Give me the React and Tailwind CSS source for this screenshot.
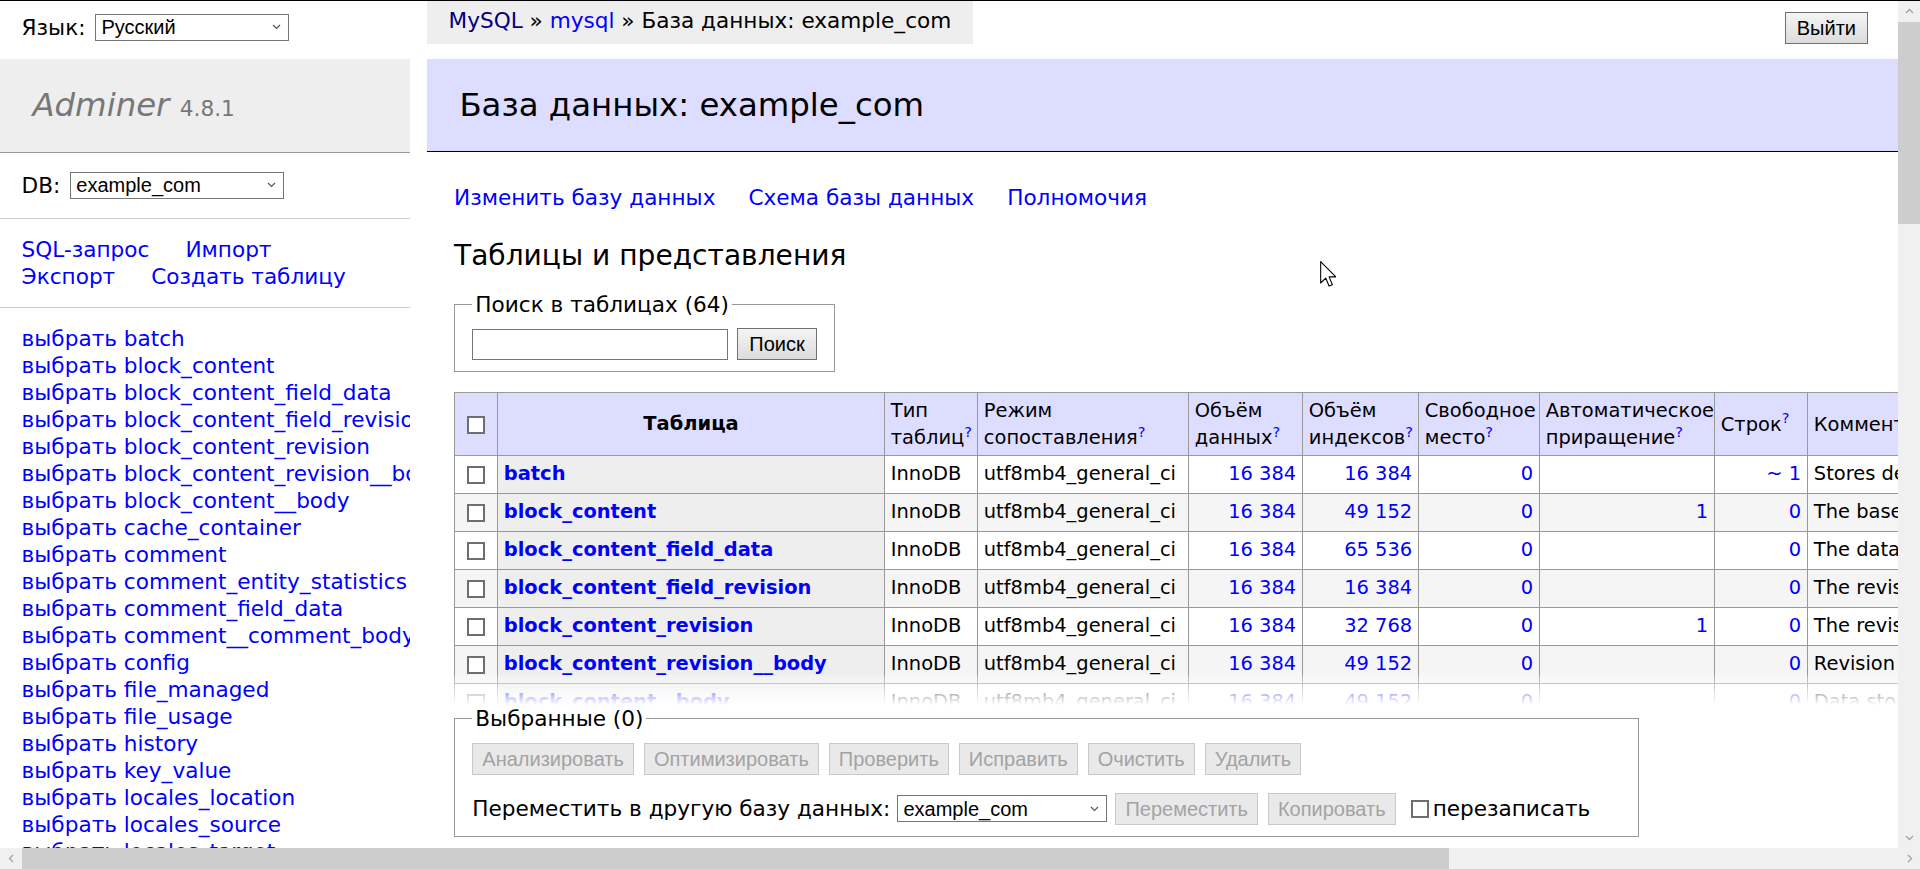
import React from "react";

const tables = [
    ["batch", "16 384", "16 384", "0", "", "~ 1", "Stores details about batches (processes that run in multiple HTTP requests)."],
    ["block_content", "16 384", "49 152", "0", "1", "0", "The base table for block_content entities."],
    ["block_content_field_data", "16 384", "65 536", "0", "", "0", "The data table for block_content entities."],
    ["block_content_field_revision", "16 384", "16 384", "0", "", "0", "The revision data table for block_content entities."],
    ["block_content_revision", "16 384", "32 768", "0", "1", "0", "The revision table for block_content entities."],
    ["block_content_revision__body", "16 384", "49 152", "0", "", "0", "Revision archive storage for block_content field body."],
    ["block_content__body", "16 384", "49 152", "0", "", "0", "Data storage for block_content field body."],
    ["cache_container", "16 384", "16 384", "0", "", "~ 12", "Storage for the cache API."],
    ["comment", "16 384", "16 384", "0", "1", "0", "The base table for comment entities."],
];

const menuTables = [
    "batch", "block_content", "block_content_field_data", "block_content_field_revision",
    "block_content_revision", "block_content_revision__body", "block_content__body",
    "cache_container", "comment", "comment_entity_statistics", "comment_field_data",
    "comment__comment_body", "config", "file_managed", "file_usage", "history",
    "key_value", "locales_location", "locales_source", "locales_target", "menu_link_content",
];

// small pieces shared by sidebar and forms
function Select({ value, className }) {
    return (
        <div className={`inline-flex items-center justify-between h-[27px] border border-[#767676] bg-white pl-[5px] pr-[7px] font-['Liberation_Sans',Arial,sans-serif] text-[20px] leading-none text-black ${className}`}>
            <span>{value}</span>
            <svg width="9" height="6" viewBox="0 0 9 6">
                <path d="M1 1l3.5 3.5L8 1" fill="none" stroke="#555" strokeWidth="1.2" />
            </svg>
        </div>
    );
}

function Checkbox({ className = "" }) {
    return <span className={`inline-block align-middle w-[18px] h-[18px] border-2 border-[#6e6e6e] bg-white ${className}`} />;
}

function Button({ children, disabled, className = "" }) {
    const look = disabled
        ? "px-[9px] border-[#c8c8c8] bg-[#e9e9e9] text-[#a3a3a3]"
        : "px-[11px] border-[#707070] bg-linear-to-b from-[#f4f4f4] to-[#dcdcdc] text-black";
    return (
        <span className={`inline-flex items-center h-[32px] border font-['Liberation_Sans',Arial,sans-serif] text-[20px] leading-none ${look} ${className}`}>
            {children}
        </span>
    );
}

function Help() {
    return <sup className="text-[#00f]">?</sup>;
}

function Chevron({ d }) {
    return (
        <svg width="9" height="9" viewBox="0 0 9 9">
            <path d={d} fill="none" stroke="#a3a3a3" strokeWidth="1.3" />
        </svg>
    );
}

export default function App() {
    const td = "border border-[#999] px-[5.8px] py-[3.9px] align-middle whitespace-nowrap";
    const head = "border border-[#999] bg-[#ddf] px-[5.8px] py-[3.9px] align-middle text-left font-normal leading-[27px]";

    return (
        <div className="w-[1920px] h-[869px] overflow-hidden flex flex-col bg-white border-t border-black font-['DejaVu_Sans',Verdana,sans-serif] text-[21.6px] leading-[27px] text-black">
            <div className="flex flex-1 min-h-0">
                {/* page viewport */}
                <div className="relative flex flex-1 min-w-0 overflow-hidden">
                    {/* Sidebar */}
                    <aside className="w-[410px] shrink-0">
                        <div className="h-[58px] px-[21.6px] pt-[6.5px]">
                            <div className="flex items-center h-[39px] gap-[10px]">
                                <span>Язык:</span>
                                <Select value="Русский" className="w-[194px]" />
                            </div>
                        </div>
                        <h1 className="h-[94px] overflow-hidden bg-[#eee] border-b border-[#999] px-[32.4px] py-[25.9px] text-[32.4px] leading-[40.5px] text-[#777] whitespace-nowrap">
                            <span className="italic">Adminer</span>{" "}
                            <span className="text-[21.7px]">4.8.1</span>
                        </h1>
                        <div className="px-[21.6px] py-[17.3px] border-b border-[#ccc]">
                            <div className="flex items-center h-[30px] gap-[10px]">
                                <span>DB:</span>
                                <Select value="example_com" className="w-[214px]" />
                            </div>
                        </div>
                        <div className="px-[21.6px] py-[17.3px] border-b border-[#ccc] flex flex-wrap gap-x-[36px] text-[#00f]">
                            <span>SQL-запрос</span>
                            <span>Импорт</span>
                            <span>Экспорт</span>
                            <span>Создать таблицу</span>
                        </div>
                        <ul className="px-[21.6px] py-[17.3px] whitespace-nowrap overflow-hidden text-[#00f]">
                            {menuTables.map((t) => (
                                <li key={t}>выбрать {t}</li>
                            ))}
                        </ul>
                    </aside>

                    {/* Content */}
                    <main className="relative ml-[17px] w-[1960px] shrink-0">
                        <div className="flex">
                            <div className="h-[43px] leading-[39px] bg-[#eee] px-[21.6px] whitespace-nowrap">
                                <span className="text-[#000080]">MySQL</span> » <span className="text-[#00f]">mysql</span> » База данных: example_com
                            </div>
                        </div>

                        <h2 className="mt-[15px] bg-[#ddf] border-b border-black px-[32.4px] py-[25.9px] text-[32.4px] leading-[40.5px] font-normal">
                            База данных: example_com
                        </h2>

                        <div className="pl-[27px]">
                            <div className="mt-[32px] flex gap-[33px] text-[#00f]">
                                <span>Изменить базу данных</span>
                                <span>Схема базы данных</span>
                                <span>Полномочия</span>
                            </div>

                            <h3 className="mt-[27px] text-[28.08px] leading-[35.1px]">Таблицы и представления</h3>

                            <fieldset className="mt-[17.3px] w-fit border border-[#999] px-[17.3px] pt-[10.8px] pb-[10.8px]">
                                <legend className="px-[3px]">Поиск в таблицах (64)</legend>
                                <div className="flex items-center gap-[9px]">
                                    <span className="inline-block w-[256px] h-[31px] border border-[#767676] bg-white" />
                                    <Button className="h-[31px]">Поиск</Button>
                                </div>
                            </fieldset>

                            <table className="mt-[20px] border-collapse table-fixed w-[1913px] text-[19.44px] leading-[24.3px]">
                                <colgroup>
                                    <col className="w-[43px]" />
                                    <col className="w-[387px]" />
                                    <col className="w-[93px]" />
                                    <col className="w-[211px]" />
                                    <col className="w-[114px]" />
                                    <col className="w-[116px]" />
                                    <col className="w-[121px]" />
                                    <col className="w-[175px]" />
                                    <col className="w-[93px]" />
                                    <col className="w-[560px]" />
                                </colgroup>
                                <thead>
                                    <tr className="h-[60px]">
                                        <td className={head}><Checkbox className="ml-[6px]" /></td>
                                        <th className="border border-[#999] bg-[#ddf] px-[9.7px] align-middle text-center font-bold">Таблица</th>
                                        <td className={head}>Тип таблиц<Help /></td>
                                        <td className={head}>Режим сопоставления<Help /></td>
                                        <td className={head}>Объём данных<Help /></td>
                                        <td className={head}>Объём индексов<Help /></td>
                                        <td className={head}>Свободное место<Help /></td>
                                        <td className={head}>Автоматическое приращение<Help /></td>
                                        <td className={head}>Строк<Help /></td>
                                        <td className={head}>Комментарий<Help /></td>
                                    </tr>
                                </thead>
                                <tbody>
                                    {tables.map((r, i) => (
                                        <tr key={r[0]} className={`h-[38px] ${i % 2 ? "bg-[#f5f5f5]" : "bg-white"}`}>
                                            <td className={td}><Checkbox className="ml-[6px]" /></td>
                                            <th className={`${td} bg-[#eee] text-left font-bold text-[#00f]`}>{r[0]}</th>
                                            <td className={td}>InnoDB</td>
                                            <td className={td}>utf8mb4_general_ci</td>
                                            <td className={`${td} text-right text-[#00f]`}>{r[1]}</td>
                                            <td className={`${td} text-right text-[#00f]`}>{r[2]}</td>
                                            <td className={`${td} text-right text-[#00f]`}>{r[3]}</td>
                                            <td className={`${td} text-right text-[#00f]`}>{r[4]}</td>
                                            <td className={`${td} text-right text-[#00f]`}>{r[5]}</td>
                                            <td className={td}>{r[6]}</td>
                                        </tr>
                                    ))}
                                </tbody>
                            </table>
                        </div>

                        {/* sticky footer */}
                        <div className="absolute left-[27px] right-0 bottom-0">
                            <div className="h-[30px] bg-linear-to-b from-white/20 to-white" />
                            <div className="bg-white pb-[10.8px]">
                                <fieldset className="w-fit border border-[#999] px-[17.3px] pt-[10.8px] pb-[10.8px]">
                                    <legend className="px-[3px]">Выбранные (0)</legend>
                                    <div className="flex items-center gap-[10px]">
                                        <Button disabled>Анализировать</Button>
                                        <Button disabled>Оптимизировать</Button>
                                        <Button disabled>Проверить</Button>
                                        <Button disabled>Исправить</Button>
                                        <Button disabled>Очистить</Button>
                                        <Button disabled>Удалить</Button>
                                    </div>
                                    <div className="mt-[17.3px] pr-[30px] flex items-center h-[33px] whitespace-nowrap">
                                        <span>Переместить в другую базу данных:</span>
                                        <Select value="example_com" className="w-[210px] ml-[7px]" />
                                        <Button disabled className="ml-[8px]">Переместить</Button>
                                        <Button disabled className="ml-[10px]">Копировать</Button>
                                        <Checkbox className="ml-[15px] mr-[4px]" />
                                        <span>перезаписать</span>
                                    </div>
                                </fieldset>
                            </div>
                        </div>
                    </main>

                    <div className="absolute right-[30px] top-[11px]">
                        <Button>Выйти</Button>
                    </div>

                    {/* mouse pointer */}
                    <svg className="absolute left-[1320px] top-[260px]" width="16" height="26" viewBox="0 0 12 19.5">
                        <path d="M0.5 0.5V16.5L4.3 12.8L6.8 18.8L9.3 17.8L6.8 11.9H11.9Z" fill="white" stroke="black" strokeWidth="0.8" strokeLinejoin="round" />
                    </svg>
                </div>

                {/* vertical scrollbar */}
                <div className="w-[22px] shrink-0 bg-[#f0f0f0] flex flex-col">
                    <div className="h-[21px] flex items-center justify-center">
                        <Chevron d="M1 6l3.5-3.5L8 6" />
                    </div>
                    <div className="h-[202px] bg-[#cdcdcd]" />
                    <div className="flex-1" />
                    <div className="h-[21px] flex items-center justify-center">
                        <Chevron d="M1 3l3.5 3.5L8 3" />
                    </div>
                </div>
            </div>

            {/* horizontal scrollbar */}
            <div className="h-[21px] shrink-0 flex bg-[#f0f0f0]">
                <div className="w-[22px] flex items-center justify-center">
                    <Chevron d="M6 1L2.5 4.5L6 8" />
                </div>
                <div className="w-[1427px] bg-[#cdcdcd]" />
                <div className="flex-1" />
                <div className="w-[22px] flex items-center justify-center">
                    <Chevron d="M3 1l3.5 3.5L3 8" />
                </div>
            </div>
        </div>
    );
}
